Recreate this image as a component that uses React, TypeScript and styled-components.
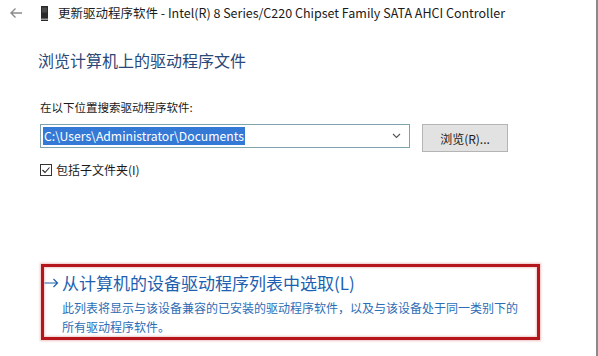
import styled, { createGlobalStyle } from 'styled-components';

const GlobalStyle = createGlobalStyle`
    html, body {
        margin: 0;
        padding: 0;
        background: #ffffff;
    }
    body {
        font-family: "Noto Sans CJK SC", "Noto Sans", sans-serif;
        color: #1a1a1a;
    }
`;

const Window = styled.div`
    width: 596px;
    height: 356px;
    border-right: 2px solid #8a8a8a;
    background: #ffffff;
    overflow: hidden;
`;

const TitleBar = styled.div`
    height: 26px;
    display: flex;
    align-items: center;
    padding-left: 9px;
`;

const BackArrow = styled.svg`
    width: 14px;
    height: 12px;
    flex-shrink: 0;
`;

const DeviceIcon = styled.svg`
    width: 7px;
    height: 15px;
    margin-left: 18px;
    flex-shrink: 0;
`;

const TitleText = styled.span`
    margin-left: 10px;
    font-size: 12.5px;
    line-height: 1;
    color: #1a1a1a;
    white-space: nowrap;
`;

const Content = styled.div`
    padding-left: 40px;
    padding-right: 86px;
`;

const Heading = styled.h1`
    margin: 22px 0 0 -2px;
    font-size: 16px;
    font-weight: 400;
    line-height: 24px;
    color: #2a4878;
`;

const Label = styled.div`
    margin-top: 27px;
    font-size: 11.5px;
    line-height: 16px;
`;

const PathRow = styled.div`
    margin-top: 9px;
    display: flex;
    align-items: flex-start;
    gap: 12px;
`;

const Combo = styled.div`
    width: 370px;
    height: 24px;
    box-sizing: border-box;
    border: 1px solid #7ea3ad;
    display: flex;
    align-items: center;
    padding: 0 8px 0 2px;
`;

const Selected = styled.span`
    background: #3579d6;
    color: #ffffff;
    font-size: 12.2px;
    line-height: 18px;
    padding: 0 1px;
    white-space: nowrap;
`;

const Chevron = styled.svg`
    width: 9px;
    height: 6px;
    margin-left: auto;
`;

const BrowseButton = styled.button`
    width: 86px;
    height: 28px;
    box-sizing: border-box;
    border: 1px solid #b4b4b4;
    background: #e2e2e2;
    font-family: "Noto Sans CJK SC", "Noto Sans", sans-serif;
    font-size: 12px;
    color: #1a1a1a;
    padding: 0;
`;

const CheckRow = styled.label`
    margin-top: 10px;
    display: flex;
    align-items: center;
    gap: 4px;
    font-size: 12px;
    line-height: 16px;
`;

const CheckBox = styled.svg`
    width: 12px;
    height: 12px;
`;

const Highlight = styled.div`
    margin: 86px 0 0 1px;
    width: 499px;
    height: 76px;
    box-sizing: border-box;
    border: 3px solid #b4161c;
    box-shadow: 0 0 2px 1px rgba(210, 80, 80, 0.35), inset 0 0 2px 1px rgba(230, 150, 150, 0.5);
    padding: 5px 0 0 0;
`;

const LinkRow = styled.div`
    display: flex;
    align-items: center;
    gap: 3px;
    color: #1d5fb0;
    font-size: 17px;
    line-height: 22px;
`;

const LinkArrow = styled.svg`
    width: 15px;
    height: 10px;
`;

const Description = styled.div`
    margin-left: 18px;
    margin-top: 4px;
    color: #2c6db6;
    font-size: 12px;
    line-height: 19px;
`;

export default function App() {
    return (
        <>
            <GlobalStyle />
            <Window>
                <TitleBar>
                    <BackArrow viewBox="0 0 14 12">
                        <path d="M13 6H2M6.5 1.5L2 6l4.5 4.5" fill="none" stroke="#8a8a8a" strokeWidth="1.4" />
                    </BackArrow>
                    <DeviceIcon viewBox="0 0 7 15">
                        <rect x="0" y="0" width="7" height="15" fill="#2a2a2a" />
                        <rect x="1" y="1.5" width="5" height="5" fill="#4a4a4a" />
                        <rect x="0" y="12.5" width="7" height="1.5" fill="#9a9a9a" />
                    </DeviceIcon>
                    <TitleText>更新驱动程序软件 - Intel(R) 8 Series/C220 Chipset Family SATA AHCI Controller</TitleText>
                </TitleBar>
                <Content>
                    <Heading>浏览计算机上的驱动程序文件</Heading>
                    <Label>在以下位置搜索驱动程序软件:</Label>
                    <PathRow>
                        <Combo>
                            <Selected>C:\Users\Administrator\Documents</Selected>
                            <Chevron viewBox="0 0 9 6">
                                <path d="M1 1l3.5 3.5L8 1" fill="none" stroke="#555" strokeWidth="1.1" />
                            </Chevron>
                        </Combo>
                        <BrowseButton>浏览(R)...</BrowseButton>
                    </PathRow>
                    <CheckRow>
                        <CheckBox viewBox="0 0 12 12">
                            <rect x="0.5" y="0.5" width="11" height="11" fill="#fff" stroke="#333" />
                            <path d="M2.5 6l2.5 2.5 4.5-5" fill="none" stroke="#222" strokeWidth="1.1" />
                        </CheckBox>
                        包括子文件夹(I)
                    </CheckRow>
                    <Highlight>
                        <LinkRow>
                            <LinkArrow viewBox="0 0 15 10">
                                <path d="M0.5 5H13.5M9.5 1l4 4-4 4" fill="none" stroke="#1d5fb0" strokeWidth="1.2" />
                            </LinkArrow>
                            从计算机的设备驱动程序列表中选取(L)
                        </LinkRow>
                        <Description>
                            此列表将显示与该设备兼容的已安装的驱动程序软件，以及与该设备处于同一类别下的
                            <br />
                            所有驱动程序软件。
                        </Description>
                    </Highlight>
                </Content>
            </Window>
        </>
    );
}
